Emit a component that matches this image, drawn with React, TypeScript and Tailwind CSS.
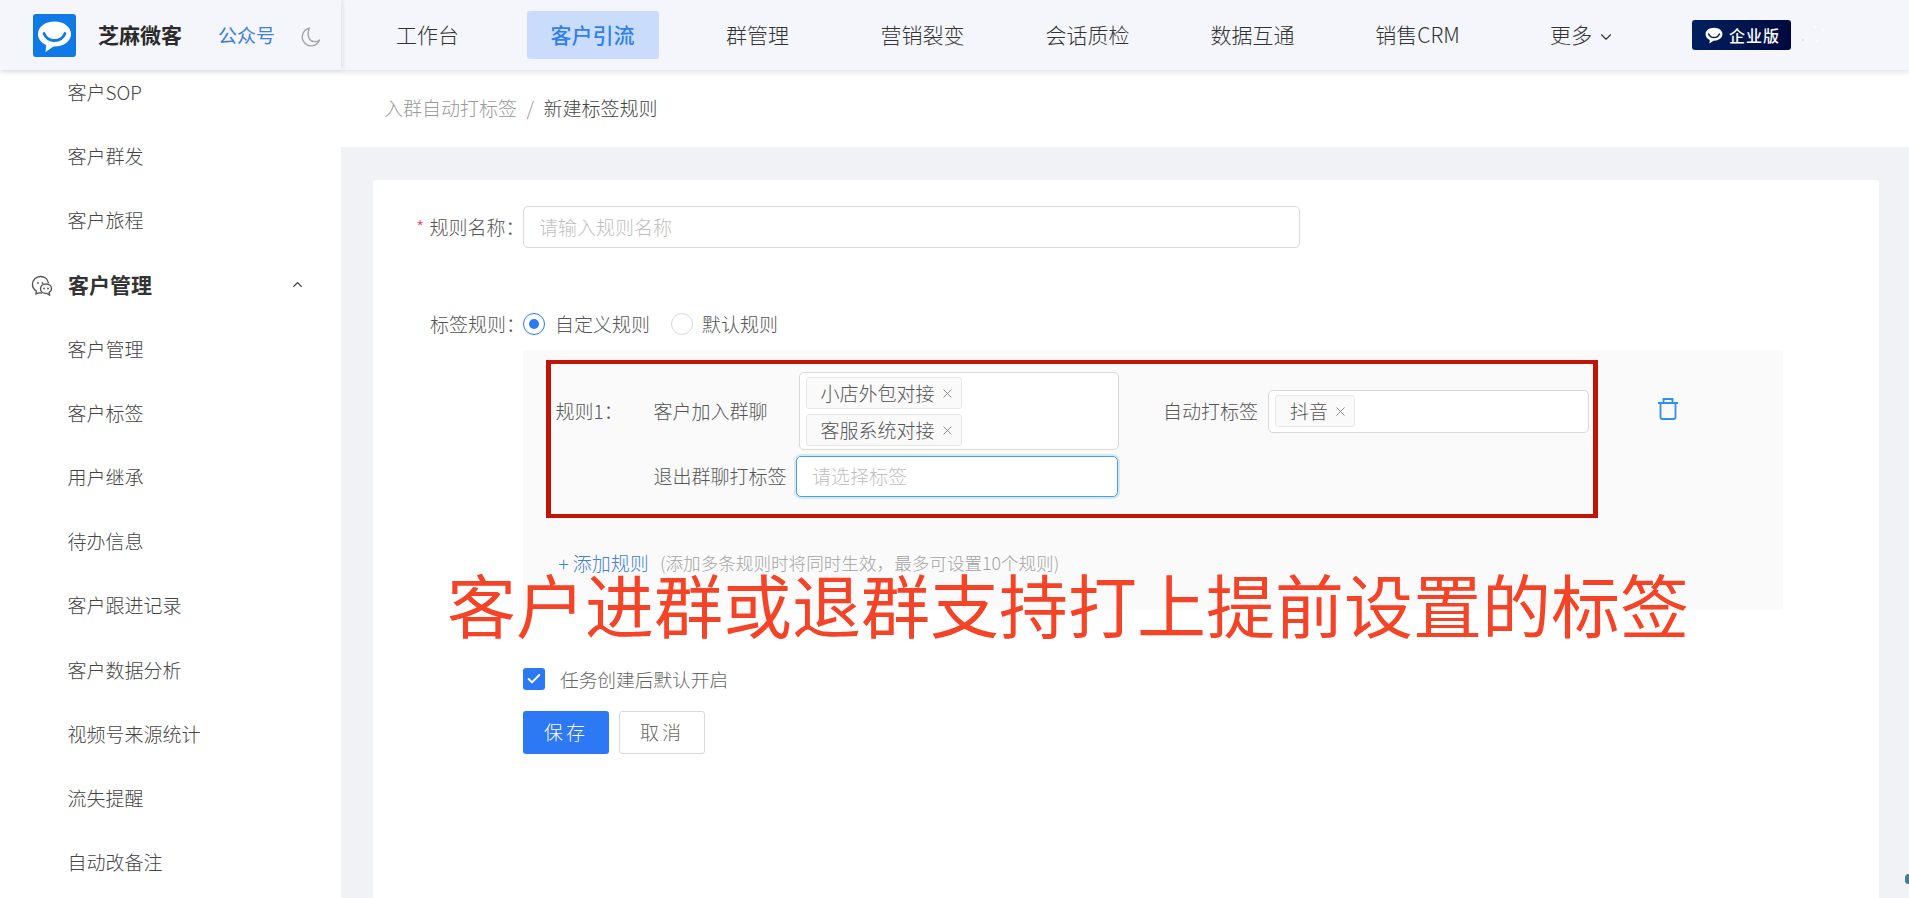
import { ChevronDown, ChevronUp, X, Check } from "lucide-react";

const NAV_ITEMS = ["工作台", "客户引流", "群管理", "营销裂变", "会话质检", "数据互通", "销售CRM"];

const SIDE_ITEMS = [
  { label: "客户SOP" },
  { label: "客户群发" },
  { label: "客户旅程" },
  { label: "客户管理", group: true },
  { label: "客户管理" },
  { label: "客户标签" },
  { label: "用户继承" },
  { label: "待办信息" },
  { label: "客户跟进记录" },
  { label: "客户数据分析" },
  { label: "视频号来源统计" },
  { label: "流失提醒" },
  { label: "自动改备注" },
];

function BubbleLogo({ className, smile }: { className?: string; smile: string }) {
  return (
    <svg viewBox="0 0 43 43" className={className}>
      <path d="M21.500 7.500C12 7.500 5 13 5 20c0 5.200 3.600 9.200 8.200 11.100L12.500 38l8-5.500h1c9.500 0 16.500-5.500 16.500-12.500S31 7.500 21.500 7.500z" fill="#fff" />
      <path d="M11 19.500c2 5 6 7 10.500 7S30 24.500 32 19.500" fill="none" stroke={smile} strokeWidth="2.800" strokeLinecap="round" />
    </svg>
  );
}

function Header() {
  return (
    <header className="relative z-10 flex h-[70px] shrink-0 items-stretch bg-[#f5f6fb] shadow-[0_2px_6px_rgba(0,0,0,0.12)]">
      <div className="flex w-[341px] shrink-0 items-center pl-[33px] shadow-[2px_0_4px_rgba(0,0,0,0.08)]">
        <div className="h-[43px] w-[43px] overflow-hidden rounded-[3px] bg-[#0f7ae5]">
          <BubbleLogo className="h-full w-full" smile="#0f7ae5" />
        </div>
        <span className="ml-[22px] text-[21px] font-bold text-[#2b2b2b]">芝麻微客</span>
        <span className="ml-[36px] text-[19px] text-[#3f7fd6]">公众号</span>
        <svg viewBox="0 0 24 24" className="ml-[25px] mt-[3px] h-[22px] w-[22px]" fill="none" stroke="#a3a3a3" strokeWidth="1.500">
          <path d="M10 2.500a9.700 9.700 0 1 0 11.500 12.300c-1.200 1.500-3 2.300-5 2.300-4.300 0-7.600-3.300-7.600-7.500 0-2.900.4-5.200 1.100-7.100z" />
        </svg>
      </div>
      <nav className="flex items-center pl-[4px]">
        {NAV_ITEMS.map((item) => (
          <div key={item} className="flex w-[165px] justify-center">
            {item === "客户引流" ? (
              <span className="flex h-[48px] w-[132px] items-center justify-center rounded-[3px] bg-[#c9dcfb] text-[21px] font-medium text-[#2f7fee]">
                {item}
              </span>
            ) : (
              <span className="text-[21px] font-light text-[#333]">{item}</span>
            )}
          </div>
        ))}
        <div className="flex w-[165px] items-center justify-center text-[21px] font-light text-[#333]">
          更多
          <ChevronDown className="ml-[5px] mt-[3px] h-[18px] w-[18px]" strokeWidth={1.5} />
        </div>
      </nav>
      <div className="ml-[27px] flex h-[30px] w-[99px] items-center justify-center self-center rounded-[3px] bg-gradient-to-r from-[#00205f] to-[#000840] text-[16px] font-medium tracking-[1px] text-white">
        <span className="mr-[4px] h-[22px] w-[22px]">
          <BubbleLogo className="h-full w-full" smile="#00205f" />
        </span>
        企业版
      </div>
      <svg viewBox="0 0 40 24" className="ml-[10px] h-[24px] w-[40px] self-center">
        <circle cx="2" cy="17" r="1" fill="#cfe0fb" />
        <circle cx="14" cy="4" r="1.500" fill="#ffffff" />
        <circle cx="22" cy="7" r="1.500" fill="#fbfcff" />
        <circle cx="16" cy="18" r="1.500" fill="#fbfcff" />
      </svg>
    </header>
  );
}

function ChatIcon() {
  return (
    <svg viewBox="0 0 22 22" className="h-[22px] w-[22px] shrink-0" fill="none" stroke="#555" strokeWidth="1.400">
      <path d="M11 19c-.6 0-1.500-.1-2.200-.3L5 20l.4-3C3 15.500 1.500 13 1.500 10.500 1.500 6 5 2.500 9.500 2.500S17 5.500 17.500 9.500" />
      <circle cx="7" cy="9" r=".9" fill="#555" stroke="none" />
      <circle cx="11.500" cy="9" r=".9" fill="#555" stroke="none" />
      <path d="M15 10c-3 0-5.500 2-5.500 4.700s2.500 4.700 5.500 4.700h.8l2.700 1.600-.3-2.600c1.400-.9 2.300-2.200 2.300-3.700C20.500 12 18 10 15 10z" fill="#fff" />
      <circle cx="13" cy="14.500" r=".9" fill="#555" stroke="none" />
      <circle cx="17" cy="14.500" r=".9" fill="#555" stroke="none" />
    </svg>
  );
}

function Sidebar() {
  return (
    <aside className="w-[341px] shrink-0 overflow-hidden bg-white">
      <ul className="mt-[-10px]">
        {SIDE_ITEMS.map((item, i) =>
          item.group ? (
            <li key={i} className="flex h-[64.2px] items-center pl-[31px] pr-[36px] text-[21px] font-bold text-[#333]">
              <ChatIcon />
              <span className="ml-[15px] flex-1">{item.label}</span>
              <ChevronUp className="h-[15px] w-[15px]" strokeWidth={2} />
            </li>
          ) : (
            <li key={i} className="flex h-[64.2px] items-center pl-[67.500px] text-[19px] font-light text-[#444]">
              {item.label}
            </li>
          ),
        )}
      </ul>
    </aside>
  );
}

function Tag({ label }: { label: string }) {
  return (
    <span className="inline-flex h-[32px] items-center rounded-[3px] border border-[#e8e8e8] bg-[#fafafa] pl-[14px] pr-[6px] text-[19px] font-light text-[#555]">
      {label}
      <X className="ml-[5px] h-[15px] w-[15px] text-[#777]" strokeWidth={1.3} />
    </span>
  );
}

function RuleBox() {
  return (
    <div className="h-[158px] w-[1052px] shrink-0 border-x-[5px] border-y-[4px] border-[#bf1506] pl-[4.500px] pt-[8px] text-[19px] font-light text-[#555]">
      <div className="flex items-center">
        <span className="w-[98px]">规则1：</span>
        <span className="w-[145px]">客户加入群聊</span>
        <div className="flex h-[78px] w-[320px] flex-col items-start gap-[5px] rounded-[5px] border border-[#d9d9d9] bg-white pl-[6px] pt-[4px]">
          <Tag label="小店外包对接" />
          <Tag label="客服系统对接" />
        </div>
        <span className="ml-[44.500px] w-[105px]">自动打标签</span>
        <div className="flex h-[43px] w-[321px] items-center rounded-[5px] border border-[#d9d9d9] bg-white pl-[6px]">
          <Tag label="抖音" />
        </div>
      </div>
      <div className="mt-[6px] flex items-center">
        <span className="ml-[98px] w-[142.500px]">退出群聊打标签</span>
        <div className="flex h-[41px] w-[322px] items-center rounded-[5px] border border-[#4a9fe0] bg-white pl-[15px] text-[#bfbfbf] shadow-[0_0_0_2px_rgba(74,159,224,0.2)]">
          请选择标签
        </div>
      </div>
    </div>
  );
}

function TrashIcon() {
  return (
    <svg viewBox="0 0 20 22" className="ml-[60px] mt-[38px] h-[22px] w-[20px] shrink-0" fill="none" stroke="#2f8fee" strokeWidth="1.800">
      <path d="M0 5h20M2.500 5v14.500c0 .8.600 1.500 1.500 1.500h12c.9 0 1.500-.7 1.500-1.500V5M5.500 5V1h9v4" />
    </svg>
  );
}

function Card() {
  return (
    <div className="h-full rounded-t-[3px] bg-white pl-[150px] pt-[26px] font-light">
      <div className="relative flex h-[42px] items-center">
        <span className="absolute left-[-107px] text-[19px] text-[#555]">
          <span className="mr-[5px] text-[#e8505b]">*</span>规则名称：
        </span>
        <div className="flex h-[42px] w-[777px] items-center rounded-[5px] border border-[#d9d9d9] pl-[15px] text-[19px] text-[#bfbfbf]">
          请输入规则名称
        </div>
      </div>

      <div className="relative mt-[55px] flex h-[42px] items-center text-[19px] text-[#555]">
        <span className="absolute left-[-93px]">标签规则：</span>
        <span className="flex h-[22px] w-[22px] items-center justify-center rounded-full border border-[#2c78f5] bg-white">
          <span className="h-[10px] w-[10px] rounded-full bg-[#2c78f5]" />
        </span>
        <span className="ml-[10px]">自定义规则</span>
        <span className="ml-[21px] h-[22px] w-[22px] rounded-full border border-[#d9d9d9] bg-white" />
        <span className="ml-[9px]">默认规则</span>
      </div>

      <div className="mt-[5px] h-[260px] w-[1260px] bg-[#fafafa] pl-[23px] pt-[10px]">
        <div className="flex items-start">
          <RuleBox />
          <TrashIcon />
        </div>
        <div className="mt-[33px] flex h-[24px] items-center pl-[12.500px]">
          <span className="text-[19px] text-[#3f7fd6]">+ 添加规则</span>
          <span className="ml-[11px] text-[17.600px] text-[#a3a3a3]">(添加多条规则时将同时生效，最多可设置10个规则)</span>
        </div>
      </div>

      <div className="mt-[55px] flex items-center">
        <span className="flex h-[22px] w-[22px] items-center justify-center rounded-[3px] bg-[#2c78f5]">
          <Check className="h-[16px] w-[16px] text-white" strokeWidth={3} />
        </span>
        <span className="ml-[15px] text-[18.700px] text-[#666]">任务创建后默认开启</span>
      </div>

      <div className="mt-[18px] flex gap-[10px]">
        <button className="h-[43px] w-[86px] rounded-[3px] bg-[#2c78f5] text-[19px] tracking-[3px] text-white">保存</button>
        <button className="h-[43px] w-[86px] rounded-[3px] border border-[#d9d9d9] bg-white text-[19px] tracking-[3px] text-[#666]">取消</button>
      </div>
    </div>
  );
}

export default function App() {
  return (
    <div className="relative flex h-[898px] w-[1909px] flex-col overflow-hidden bg-white font-['Noto_Sans_CJK_SC','Liberation_Sans',sans-serif]">
      <Header />
      <div className="flex min-h-0 flex-1">
        <Sidebar />
        <main className="flex min-w-0 flex-1 flex-col">
          <div className="flex h-[77px] shrink-0 items-center bg-white pl-[43px] text-[19px] font-light">
            <span className="text-[#999]">入群自动打标签</span>
            <span className="mx-[9.500px] text-[#999]">/</span>
            <span className="text-[#444]">新建标签规则</span>
          </div>
          <div className="min-h-0 flex-1 bg-[#f0f2f6] pl-[32px] pr-[30px] pt-[33px]">
            <Card />
          </div>
        </main>
      </div>
      <div className="absolute left-[447px] top-[553px] whitespace-nowrap text-[69px] font-normal leading-[100px] text-[#f44326]">
        客户进群或退群支持打上提前设置的标签
      </div>
      <span className="absolute bottom-[14px] right-[-3px] h-[10px] w-[7px] rounded-full bg-[#3f7f93]" />
    </div>
  );
}
